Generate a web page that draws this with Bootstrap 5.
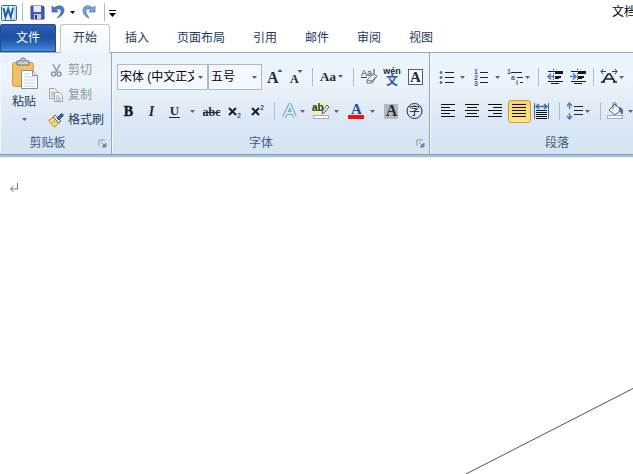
<!DOCTYPE html>
<html lang="zh-CN">
<head>
<meta charset="utf-8">
<meta name="viewport" content="width=device-width, initial-scale=1">
<title>文档</title>
<link href="https://cdn.jsdelivr.net/npm/bootstrap@5.3.0/dist/css/bootstrap.min.css" rel="stylesheet">
<style>
body{font:12px/16px "Liberation Sans","Noto Sans CJK SC",sans-serif;color:#1e395b;background:#fff}
button,select{font:inherit;color:inherit}
svg{display:block;flex:none}
.serif{font-family:"Liberation Serif",serif;font-weight:700}
.titlebar{height:24px}
.tool{border:0;background:none;padding:0;display:flex;align-items:center;justify-content:center;flex:none}
.win-title{margin-left:auto;width:21px;overflow:hidden;white-space:nowrap;color:#000}
.tabs{height:29px;border-bottom:1px solid #9fa8b3}
.tabs .nav-link{padding:6px 14px 0;color:#1e395b;border:0;border-radius:3px 3px 0 0;height:28px}
.tabs .file-tab{padding:6px 16px 0;margin-right:4px;color:#fff;background:linear-gradient(#2d62b8,#1f4f9f 45%,#2a64b8 70%,#4b93dc);box-shadow:inset 0 0 0 1px #1f4c96}
.tabs .nav-link.active{padding:5px 12px 0;margin:0 1px -1px 0;height:29px;border:1px solid #bcc4ce;border-bottom:0;color:#1e395b;background:linear-gradient(#fff,#eef6fd)}
.ribbon{background:linear-gradient(#e9f3fc,#edf4fb 25%,#dce8f5 65%,#d5e4f2);border-bottom:1px solid #7ba0c2;box-shadow:0 2px 0 #abc3da,0 3px 0 #e4ebf3;height:102px;flex:none}
.group{border-right:1px solid #8ba9c8;box-shadow:inset 1px 0 0 #f5f9fd;height:101px}
.clip{width:112px}
.font{width:318px;padding-left:5px}
.para{flex:1 0 250px;padding-left:5px}
.group-name{height:21px;color:#3f5c84;text-align:center;position:relative;line-height:20px}
.launch{position:absolute;right:4px;top:6px}
.rows{height:80px}
.tool-rows{padding-top:7px}
.tool-row{height:34px}
.div-line{width:10px;flex:none;height:18px;background:linear-gradient(#a9bdd3,#a9bdd3) center/1px 100% no-repeat}
.slim{width:8px}
.combo{height:26px;border:1px solid #aab9cc;border-radius:0;background:#f4f8fd url("data:image/svg+xml,%3Csvg xmlns='http://www.w3.org/2000/svg' width='5' height='3'%3E%3Cpath d='M0 0h5L2.5 3z' fill='%23526580'/%3E%3C/svg%3E") right 4px center no-repeat;appearance:none;padding:0 13px 0 2px;color:#000;flex:none}
.face{width:91px}
.size{width:54px}
.paste{width:48px;flex-direction:column;justify-content:flex-start;padding-top:4px}
.side{height:25px;color:#1e395b;justify-content:flex-start;gap:4px}
.side:disabled{color:#8b97a6}
.picked{border:1px solid #c99b3f;border-radius:3px;background:linear-gradient(#fbd367,#ffe682);height:23px;width:23px;overflow:hidden}
.page{overflow:hidden;position:relative;padding:22px 9px}
.stroke{position:absolute;right:0;bottom:0}
</style>
<script src="https://cdn.jsdelivr.net/npm/bootstrap@5.3.0/dist/js/bootstrap.bundle.min.js"></script>
</head>
<body class="vh-100 d-flex flex-column overflow-hidden">
<svg width="0" height="0" class="position-absolute" aria-hidden="true">
<symbol id="caret" viewBox="0 0 5 3"><path d="M0 0h5L2.5 3z" fill="#526580"/></symbol>
<symbol id="corner" viewBox="0 0 9 9"><path d="M1 7V1h6" fill="none" stroke="#8497af"/><path d="M3.500 3.500l3 3M8 4v4H4z" fill="#71869f" stroke="#71869f"/></symbol>
</svg>

<header class="titlebar d-flex align-items-center">
<button class="tool" aria-label="Word"><svg width="18" height="20"><rect x="1.500" y="3.500" width="15" height="15" rx="1" fill="#e6f1fb" stroke="#2d6eae"/><path d="M12 5h3v12h-3" fill="#fff" stroke="#85b2dc"/><path d="M3.500 6l2 9 2.700-8 2.600 8L13 6" fill="none" stroke="#205fa8" stroke-width="2"/></svg></button>
<span class="div-line slim me-1"></span>
<button class="tool" aria-label="保存"><svg width="17" height="20"><path d="M0 4h12l1 1v12H0z" fill="#4658b0" stroke="#37479a" transform="translate(1)"/><path d="M3.500 4h7.500v6H3.500z" fill="#e8edfa"/><path d="M4 12h7v5H4z" fill="#c5cdea"/><path d="M5 13h2v4H5z" fill="#2c3978"/></svg></button>
<button class="tool ms-1" aria-label="撤消"><svg width="16" height="20"><path d="M1 4v6h6L5 8c3-2 6-1 5 2-.4 2-2 4-4 6 5-2 7-5 7-8 0-4-5-6-10-2z" fill="#5179c4" stroke="#3c5d9f" stroke-width=".7"/></svg></button>
<button class="tool" aria-label="撤消列表"><svg width="11" height="20"><path d="M3 9h5l-2.500 3z"/></svg></button>
<button class="tool" aria-label="恢复"><svg width="22" height="20"><path d="M17 4v6h-6l2-2c-3-2-6-1-5 2 .4 2 2 4 3 6-5-2-6-5-6-8 0-4 5-6 10-2z" fill="#78a3dc" stroke="#3e70b4" stroke-width=".7"/></svg></button>
<span class="div-line slim"></span>
<button class="tool" aria-label="自定义快速访问工具栏"><svg width="10" height="20"><path d="M1 8.500h7" stroke="#000"/><path d="M1 11h7l-3.500 4z"/></svg></button>
<span class="win-title">文档</span>
</header>

<nav class="nav tabs flex-nowrap align-items-end" aria-label="功能区">
<a class="nav-link file-tab" href="#">文件</a><a class="nav-link active" href="#" aria-current="page">开始</a><a class="nav-link" href="#">插入</a><a class="nav-link" href="#">页面布局</a><a class="nav-link" href="#">引用</a><a class="nav-link" href="#">邮件</a><a class="nav-link" href="#">审阅</a><a class="nav-link" href="#">视图</a>
</nav>

<div class="ribbon d-flex">
<section class="group clip flex-shrink-0">
<div class="rows d-flex">
<button class="tool paste"><svg width="30" height="37"><rect x="3.500" y="5.500" width="21" height="24" rx="2" fill="#f2c063" stroke="#d29a3c"/><path d="M8 4h3c0-4 6-4 6 0h3v4H8z" fill="#c9d0d8" stroke="#66717e"/><path d="M12 4h4" stroke="#66717e"/><path d="M12.500 13.500h11l5 5v13h-16z" fill="#fff" stroke="#7b8fb0"/><path d="M23.500 13.500v5h5" fill="#dce6f3" stroke="#7b8fb0"/><path d="M15 17h6M15 20h11M15 23h11M15 26h11M15 29h11" stroke="#c3cfe0"/></svg><span>粘贴</span><svg width="5" height="14"><use href="#caret" y="8" width="5" height="3"/></svg></button>
<div class="pt-1">
<button class="tool side" disabled><svg width="16" height="16"><g fill="none" stroke="#8b98ab" stroke-width="1.500"><path d="M5 2l4 8M12 2L8 10"/><circle cx="5.500" cy="12" r="2"/><circle cx="11" cy="12" r="2"/></g></svg>剪切</button>
<button class="tool side" disabled><svg width="16" height="16"><g fill="#f3f6fa" stroke="#99a5b5"><path d="M1.500 1.500h5l3 3v7h-8z"/><path d="M3 5h3M3 7h3M3 9h3"/><path d="M6.500 5.500h5l3 3v6h-8z"/><path d="M8 9h3M8 11h5M8 13h5"/></g></svg>复制</button>
<button class="tool side"><svg width="16" height="16"><path d="M1 8l5-3 5 5-4 5c-2 0-5-4-6-7z" fill="#f8df81" stroke="#b1872c"/><path d="M5 5l2-2 6 6-2 2z" fill="#dce3eb" stroke="#56657b"/><path d="M9 6l4-4c1-1 3 1 2 2l-4 4z" fill="#426ba8" stroke="#2a4470"/><path d="M4 9l3 3M6 8l3 3" stroke="#c49c3d"/></svg>格式刷</button>
</div>
</div>
<div class="group-name pe-3">剪贴板<button class="tool launch" aria-label="剪贴板选项"><svg width="9" height="9"><use href="#corner"/></svg></button></div>
</section>

<section class="group font flex-shrink-0">
<div class="rows tool-rows">
<div class="tool-row d-flex align-items-center">
<select class="combo face" aria-label="字体"><option>宋体 (中文正文)</option></select>
<select class="combo size" aria-label="字号"><option>五号</option></select>
<button class="tool" aria-label="增大字体"><svg width="24" height="24"><text x="5" y="18" font-size="16" class="serif" fill="#222b38">A</text><path d="M15.500 7l2.500-3 2.500 3z" fill="#3a5f96"/></svg></button>
<button class="tool" aria-label="缩小字体"><svg width="22" height="24"><text x="4" y="18" font-size="12" class="serif" fill="#222b38">A</text><path d="M11.500 5h5L14 8z" fill="#3a5f96"/></svg></button>
<span class="div-line slim"></span>
<button class="tool" aria-label="更改大小写"><svg width="32" height="24"><text x="4" y="16" font-size="13" class="serif" fill="#222b38">Aa</text><use href="#caret" x="22" y="10" width="5" height="3"/></svg></button>
<span class="div-line"></span>
<button class="tool" aria-label="清除格式"><svg width="23" height="24"><text x="3" y="11" font-size="9" fill="#3c4550" font-family="Liberation Sans">Aa</text><path d="M16 4v7M3 12.500h6" stroke="#3c4550"/><path d="M9 15l6-6 4 2-5 7H9z" fill="#e9edf4" stroke="#6a7c98"/><path d="M9 15l5 1 5-5M14 16v2" fill="none" stroke="#6a7c98"/></svg></button>
<button class="tool" aria-label="拼音指南"><svg width="23" height="24"><text x="11" y="9" text-anchor="middle" font-size="9" font-weight="700" fill="#222b38" font-family="Liberation Sans">wén</text><text x="11" y="20" text-anchor="middle" font-size="12" font-weight="700" fill="#2d5ca4" font-family="Noto Sans CJK SC">文</text></svg></button>
<button class="tool" aria-label="字符边框"><svg width="23" height="24"><rect x="4.500" y="4.500" width="14" height="15" fill="#fafcff" stroke="#4d5c70"/><text x="11.500" y="17" text-anchor="middle" font-size="15" class="serif" fill="#222b38">A</text></svg></button>
</div>
<div class="tool-row d-flex align-items-center">
<button class="tool" aria-label="加粗"><svg width="23" height="24"><text x="11.500" y="17" text-anchor="middle" font-size="14" class="serif" fill="#101820" stroke="#101820" stroke-width=".4">B</text></svg></button>
<button class="tool" aria-label="倾斜"><svg width="23" height="24"><text x="11.500" y="17" text-anchor="middle" font-size="14" class="serif" font-style="italic" fill="#222b38">I</text></svg></button>
<button class="tool" aria-label="下划线"><svg width="37" height="24"><text x="11.500" y="16" text-anchor="middle" font-size="13" class="serif" fill="#222b38">U</text><path d="M6 18.500h11" stroke="#222b38"/><use href="#caret" x="27" y="11" width="5" height="3"/></svg></button>
<button class="tool" aria-label="删除线"><svg width="23" height="24"><text x="11.500" y="17" text-anchor="middle" font-size="12" class="serif" fill="#222b38">abc</text><path d="M3 13.500h17" stroke="#222b38"/></svg></button>
<button class="tool" aria-label="下标"><svg width="23" height="24"><path d="M6 9l7 7M13 9l-7 7" stroke="#16202c" stroke-width="2"/><text x="14" y="19" font-size="7" font-weight="700" fill="#2864b0">2</text></svg></button>
<button class="tool" aria-label="上标"><svg width="23" height="24"><path d="M6 9l7 7M13 9l-7 7" stroke="#16202c" stroke-width="2"/><text x="14" y="11" font-size="7" font-weight="700" fill="#2864b0">2</text></svg></button>
<span class="div-line"></span>
<button class="tool" aria-label="文本效果"><svg width="31" height="24"><path d="M5 18L11 6l5 12M7.500 14h7" fill="none" stroke="#73b4d2" stroke-width="4" stroke-linejoin="round"/><path d="M5 18L11 6l5 12M7.500 14h7" fill="none" stroke="#edf8fd" stroke-width="1.500"/><use href="#caret" x="21" y="11" width="5" height="3"/></svg></button>
<button class="tool" aria-label="突出显示"><svg width="35" height="24"><path d="M3 4h14v11H3z" fill="#f8f4a5"/><text x="2" y="12" font-size="10" font-weight="700" font-family="Liberation Sans" fill="#222b38">ab</text><path d="M12 15l1-4 4-5 2 2-4 5z" fill="#e1e8f1" stroke="#53667f"/><rect x="3.500" y="16.500" width="15" height="3" fill="#fff" stroke="#a8afb6"/><use href="#caret" x="24" y="11" width="5" height="3"/></svg></button>
<button class="tool" aria-label="字体颜色"><svg width="35" height="24"><text x="11.500" y="15" text-anchor="middle" font-size="15" class="serif" fill="#284e8d">A</text><path d="M3 16h16v4H3z" fill="#ee1111"/><use href="#caret" x="25" y="11" width="5" height="3"/></svg></button>
<button class="tool" aria-label="字符底纹"><svg width="23" height="24"><path d="M4 5h14v15H4z" fill="#b5b8b9"/><text x="11.500" y="17" text-anchor="middle" font-size="16" class="serif" fill="#222b38">A</text></svg></button>
<button class="tool" aria-label="带圈字符"><svg width="23" height="24"><circle cx="11.500" cy="12" r="7.500" fill="none" stroke="#222b38"/><text x="11.500" y="16" text-anchor="middle" font-size="11" font-family="Noto Sans CJK SC" fill="#111">字</text></svg></button>
</div>
</div>
<div class="group-name pe-4">字体<button class="tool launch" aria-label="字体选项"><svg width="9" height="9"><use href="#corner"/></svg></button></div>
</section>

<section class="group para">
<div class="rows tool-rows">
<div class="tool-row d-flex align-items-center">
<button class="tool" aria-label="项目符号"><svg width="35" height="24"><path d="M10 7.500h9M10 12.500h9M10 17.500h9" stroke="#20262e"/><g fill="#6d91c5" stroke="#37619b"><circle cx="6" cy="7.500" r="1"/><circle cx="6" cy="12.500" r="1"/><circle cx="6" cy="17.500" r="1"/></g><use href="#caret" x="25" y="11" width="5" height="3"/></svg></button>
<button class="tool" aria-label="编号"><svg width="35" height="24"><path d="M10 7.500h8M10 12.500h8M10 17.500h8" stroke="#20262e"/><g font-size="7" font-weight="700" fill="#345d98"><text x="4" y="9">1</text><text x="4" y="15">2</text><text x="4" y="21">3</text></g><use href="#caret" x="25" y="11" width="5" height="3"/></svg></button>
<button class="tool" aria-label="多级列表"><svg width="28" height="24"><path d="M6 7.500h11M12 12.500h6M15 17.500h3" stroke="#20262e"/><g font-size="7" font-weight="700" fill="#345d98"><text x="2" y="9">1</text><text x="6" y="15">a</text><text x="11" y="20">i</text></g><use href="#caret" x="20" y="11" width="5" height="3"/></svg></button>
<span class="div-line"></span>
<button class="tool" aria-label="减少缩进"><svg width="23" height="24"><path d="M5 6.500h15M12 8.500h8M12 11.500h6M12 13.500h4M5 16.500h15M8 18.500h8" stroke="#15191f"/><path d="M11 11.500H5M8 8.500l-3 3 3 3" stroke="#477fbb" stroke-width="1.500" fill="none"/><path d="M10.500 4v16" stroke="#333" stroke-dasharray="1 1"/><path d="M12 7h8M12 12h6" stroke="#15191f" stroke-width="2"/></svg></button>
<button class="tool" aria-label="增加缩进"><svg width="23" height="24"><path d="M5 6.500h15M12 8.500h8M12 11.500h6M12 13.500h4M5 16.500h15M8 18.500h8" stroke="#15191f"/><path d="M4 11.500h6M7 8.500l3 3-3 3" stroke="#477fbb" stroke-width="1.500" fill="none"/><path d="M11.500 4v16" stroke="#333" stroke-dasharray="1 1"/><path d="M12 7h8M12 12h6" stroke="#15191f" stroke-width="2"/></svg></button>
<span class="div-line slim"></span>
<button class="tool" aria-label="中文版式"><svg width="33" height="24"><path d="M6 17l5-8h2l5 8M8 14h8M4 17h4M16 17h4" fill="none" stroke="#19202a" stroke-width="1.500"/><path d="M4 6.500h5M15 6.500h5M6 4L4 6.500 6 9M18 4l2 2.500L18 9" fill="none" stroke="#21457d"/><use href="#caret" x="22" y="11" width="5" height="3"/></svg></button>
</div>
<div class="tool-row d-flex align-items-center ps-1">
<button class="tool" aria-label="左对齐"><svg width="23" height="24"><path d="M2 5.500h14M2 8.500h9M2 11.500h14M2 14.500h9M2 17.500h14" stroke="#111"/></svg></button>
<button class="tool" aria-label="居中"><svg width="23" height="24"><path d="M3 5.500h14M5 8.500h10M3 11.500h14M5 14.500h10M3 17.500h14" stroke="#111"/></svg></button>
<button class="tool" aria-label="右对齐"><svg width="23" height="24"><path d="M3 5.500h14M8 8.500h9M3 11.500h14M8 14.500h9M3 17.500h14" stroke="#111"/></svg></button>
<button class="tool picked" aria-label="两端对齐" aria-pressed="true"><svg width="21" height="22"><path d="M3 4.500h14M3 7.500h14M3 10.500h14M3 13.500h14M3 16.500h14" stroke="#111"/></svg></button>
<button class="tool" aria-label="分散对齐"><svg width="23" height="24"><path d="M3.500 4v16M17.500 4v16" stroke="#54677e"/><path d="M5 11.500h11M5 13.500h11M5 15.500h11M5 17.500h11M5 19.500h11" stroke="#111"/><path d="M5 7.500h11M8 5L5 7.500 8 10M13 5l3 2.500-3 2.500" fill="none" stroke="#2f6db5" stroke-width="1.500"/></svg></button>
<span class="div-line"></span>
<button class="tool" aria-label="行距"><svg width="32" height="24"><path d="M10 7.500h9M10 11.500h9M10 15.500h9" stroke="#20262e"/><path d="M5.500 5v5M5.500 14v5M3 7l2.500-3L8 7M3 17l2.500 3L8 17" fill="none" stroke="#4b83bd" stroke-width="1.500"/><use href="#caret" x="21" y="11" width="5" height="3"/></svg></button>
<span class="div-line slim"></span>
<button class="tool" aria-label="底纹"><svg width="31" height="24"><path d="M5 11l6-6 6 6-6 5z" fill="#f2f5f9" stroke="#56657b"/><path d="M9 10V5c0-2 3-2 3 0v3" fill="none" stroke="#56657b"/><path d="M15 8c4 1 5 4 3 8l-3-5z" fill="#3f6eae"/><rect x="3.500" y="16.500" width="15" height="3" fill="#f5f7f9" stroke="#a8afb6"/><use href="#caret" x="24" y="11" width="5" height="3"/></svg></button>
</div>
</div>
<div class="group-name">段落</div>
</section>
</div>

<main class="page flex-grow-1" aria-label="文档正文">
<svg width="10" height="22" role="img" aria-label="段落标记"><path d="M8.500 6v6h-7M4.500 9l-3 3 3 3" fill="none" stroke="#777"/></svg>
<svg class="stroke" width="167" height="86"><path d="M0 86L167 .5" stroke="#555"/></svg>
</main>
</body>
</html>
